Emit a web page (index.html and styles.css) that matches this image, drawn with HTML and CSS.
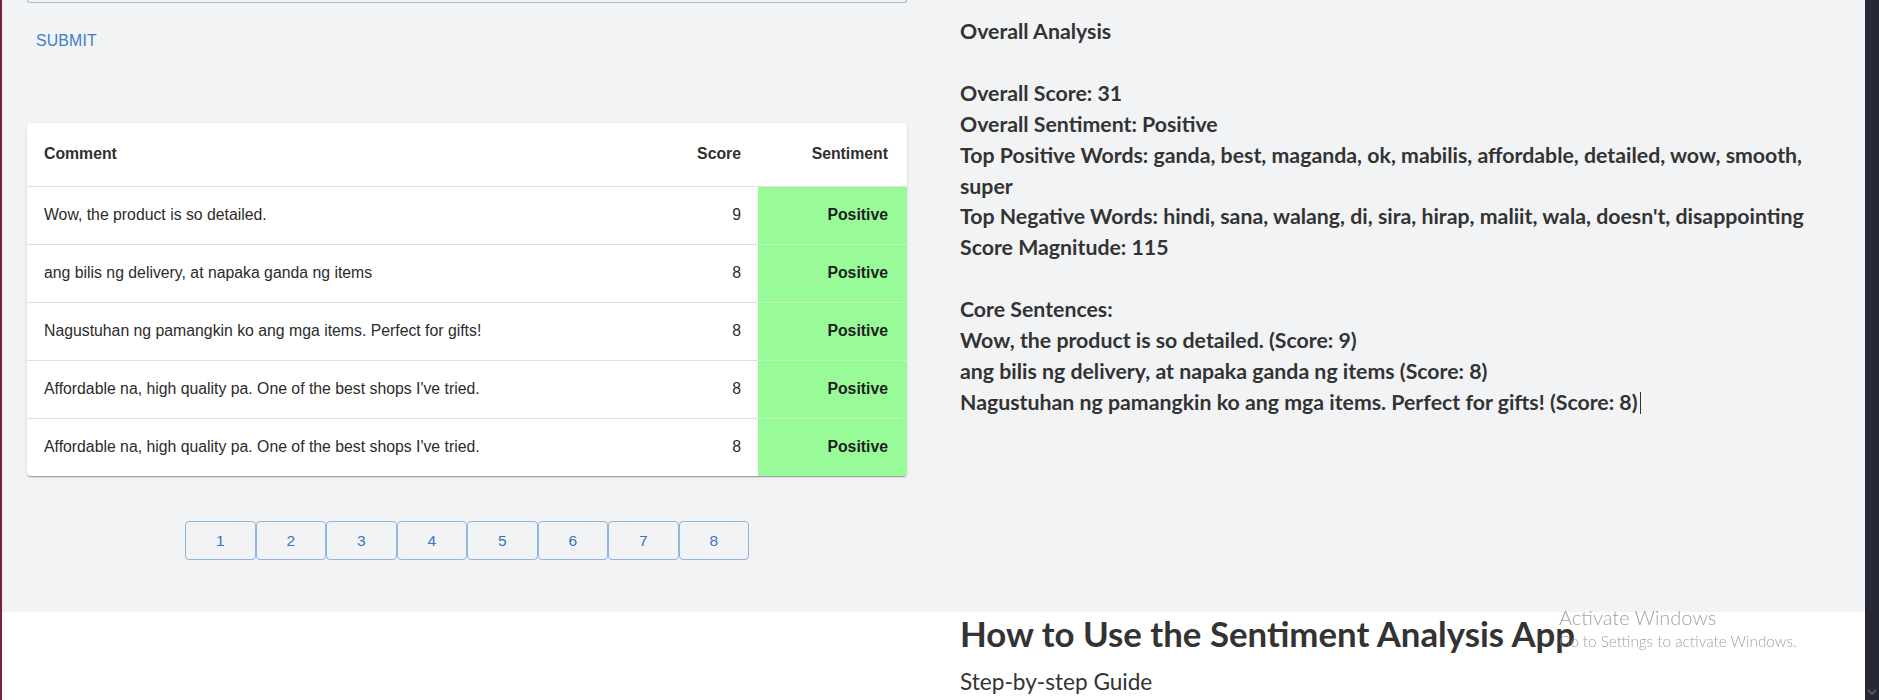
FILE: index.html
```html
<!DOCTYPE html>
<html lang="en">
<head>
<meta charset="utf-8">
<title>Sentiment Analysis</title>
<link rel="stylesheet" href="styles.css">
</head>
<body>
<div class="page">
  <div class="edge"></div>
  <div class="content">
    <section class="analysis">
      <div class="left">
        <div class="input-tail"></div>
        <button class="submit">Submit</button>
        <div class="card">
          <table class="results">
            <colgroup>
              <col>
              <col class="col-score">
              <col class="col-sent">
            </colgroup>
            <thead>
              <tr>
                <th class="c-comment">Comment</th>
                <th class="c-score">Score</th>
                <th class="c-sent">Sentiment</th>
              </tr>
            </thead>
            <tbody>
              <tr>
                <td class="c-comment">Wow, the product is so detailed.</td>
                <td class="c-score">9</td>
                <td class="c-sent positive">Positive</td>
              </tr>
              <tr>
                <td class="c-comment">ang bilis ng delivery, at napaka ganda ng items</td>
                <td class="c-score">8</td>
                <td class="c-sent positive">Positive</td>
              </tr>
              <tr>
                <td class="c-comment">Nagustuhan ng pamangkin ko ang mga items. Perfect for gifts!</td>
                <td class="c-score">8</td>
                <td class="c-sent positive">Positive</td>
              </tr>
              <tr>
                <td class="c-comment">Affordable na, high quality pa. One of the best shops I've tried.</td>
                <td class="c-score">8</td>
                <td class="c-sent positive">Positive</td>
              </tr>
              <tr>
                <td class="c-comment">Affordable na, high quality pa. One of the best shops I've tried.</td>
                <td class="c-score">8</td>
                <td class="c-sent positive">Positive</td>
              </tr>
            </tbody>
          </table>
        </div>
        <div class="pager">
          <button class="page-btn">1</button>
          <button class="page-btn">2</button>
          <button class="page-btn">3</button>
          <button class="page-btn">4</button>
          <button class="page-btn">5</button>
          <button class="page-btn">6</button>
          <button class="page-btn">7</button>
          <button class="page-btn">8</button>
        </div>
      </div>
      <div class="right">
        <div class="result-text">
          <div class="line">Overall Analysis</div>
          <div class="line">&nbsp;</div>
          <div class="line">Overall Score: 31</div>
          <div class="line">Overall Sentiment: Positive</div>
          <div class="line">Top Positive Words: ganda, best, maganda, ok, mabilis, affordable, detailed, wow, smooth,</div>
          <div class="line">super</div>
          <div class="line">Top Negative Words: hindi, sana, walang, di, sira, hirap, maliit, wala, doesn't, disappointing</div>
          <div class="line">Score Magnitude: 115</div>
          <div class="line">&nbsp;</div>
          <div class="line">Core Sentences:</div>
          <div class="line">Wow, the product is so detailed. (Score: 9)</div>
          <div class="line">ang bilis ng delivery, at napaka ganda ng items (Score: 8)</div>
          <div class="line">Nagustuhan ng pamangkin ko ang mga items. Perfect for gifts! (Score: 8)<span class="caret"></span></div>
        </div>
      </div>
    </section>
    <section class="guide">
      <div class="guide-spacer"></div>
      <div class="guide-body">
        <h1 class="guide-title">How to Use the Sentiment Analysis App</h1>
        <h2 class="guide-sub">Step-by-step Guide</h2>
      </div>
    </section>
  </div>
  <div class="scrollbar">
    <svg class="chev" width="10" height="6" viewBox="0 0 10 6"><path d="M1 1 L5 5 L9 1" fill="none" stroke="#6b6f7c" stroke-width="1.3"/></svg>
  </div>
</div>
<div class="watermark">
  <div class="wm-title">Activate Windows</div>
  <div class="wm-sub">Go to Settings to activate Windows.</div>
</div>
</body>
</html>
```

FILE: styles.css
```css
* { box-sizing: border-box; }

html, body {
  margin: 0;
  padding: 0;
  height: 700px;
  overflow: hidden;
  background: #ffffff;
}

.page {
  display: flex;
  height: 700px;
  width: 1879px;
}

.edge {
  width: 2px;
  flex: 0 0 2px;
  background: #7e2035;
}

.content {
  flex: 1 1 auto;
  min-width: 0;
  background: #ffffff;
}

.scrollbar {
  flex: 0 0 14px;
  width: 14px;
  background: #262935;
  display: flex;
  flex-direction: column;
  justify-content: flex-end;
  align-items: center;
  padding-bottom: 5px;
}

/* ---------- analysis section ---------- */
.analysis {
  display: grid;
  grid-template-columns: 932px 1fr;
  background: #f2f3f5;
  height: 612px;
}

.left {
  padding: 0 0 0 25px;
  display: flex;
  flex-direction: column;
  align-items: flex-start;
}

.input-tail {
  width: 880px;
  height: 3px;
  border: 1px solid #a9b8d2;
  border-top: none;
  border-radius: 0 0 5px 5px;
}

.submit {
  margin-top: 20px;
  height: 36px;
  padding: 6px 9px;
  border: none;
  background: transparent;
  font-family: "Liberation Sans", Arial, sans-serif;
  font-size: 15.8px;
  line-height: 24px;
  letter-spacing: 0.2px;
  text-transform: uppercase;
  color: #3d7fc9;
}

.card {
  margin-top: 64px;
  width: 880px;
  background: #ffffff;
  border-radius: 4px;
  overflow: hidden;
  box-shadow: 0 2px 1px -1px rgba(0,0,0,0.2), 0 1px 1px 0 rgba(0,0,0,0.14), 0 1px 3px 0 rgba(0,0,0,0.12);
}

.results {
  width: 100%;
  border-collapse: collapse;
  table-layout: fixed;
  font-family: "Liberation Sans", Arial, sans-serif;
  font-size: 15.8px;
}

.col-score { width: 140px; }
.col-sent { width: 149px; }

.results th {
  height: 63px;
  font-weight: bold;
  color: #2f2f2f;
  border-bottom: 1px solid #e0e0e0;
  padding: 0 16px;
}

.results td {
  height: 58px;
  color: #2b2b2b;
  border-bottom: 1px solid #e0e0e0;
  padding: 0 16px;
}

.results tbody tr:last-child td { border-bottom: none; }

.results .c-comment { text-align: left; padding-left: 17px; }
.results .c-score { text-align: right; padding-right: 17px; }
.results .c-sent { text-align: right; padding-right: 19px; }

.results td.positive {
  background: #98fb98;
  font-weight: bold;
  color: #1f1f1f;
  border-bottom-color: #bdf7bd;
}

.pager {
  margin-top: 45px;
  align-self: stretch;
  width: 880px;
  display: flex;
  justify-content: center;
}

.page-btn {
  width: 70.5px;
  height: 39px;
  border: 1px solid #8fb5e0;
  border-radius: 4px;
  background: transparent;
  font-family: "Liberation Sans", Arial, sans-serif;
  font-size: 15.5px;
  color: #3b73bf;
  padding: 0;
}

/* ---------- right result text ---------- */
.right {
  padding: 16px 0 0 26px;
}

.result-text {
  font-family: Lato, "Open Sans", sans-serif;
  font-weight: bold;
  font-size: 21.3px;
  line-height: 30.9px;
  color: #333333;
  white-space: nowrap;
}

.caret {
  display: inline-block;
  width: 0;
  height: 22px;
  border-left: 1.5px solid #333333;
  vertical-align: -4px;
  margin-left: 2px;
}

/* ---------- guide section ---------- */
.guide {
  display: grid;
  grid-template-columns: 932px 1fr;
  background: #ffffff;
}

.guide-body {
  padding-left: 26px;
}

.guide-title {
  margin: 3px 0 0 0;
  font-family: Lato, "Open Sans", sans-serif;
  font-weight: bold;
  font-size: 34.8px;
  line-height: 38px;
  color: #333333;
}

.guide-sub {
  margin: 15px 0 0 0;
  font-family: Lato, "Open Sans", sans-serif;
  font-weight: normal;
  font-size: 22.6px;
  line-height: 28px;
  color: #333333;
}

/* ---------- OS watermark overlay ---------- */
.watermark {
  position: fixed;
  left: 1559px;
  top: 605px;
  font-family: Lato, "Open Sans", sans-serif;
  color: rgba(130, 130, 130, 0.75);
}

.wm-title {
  font-size: 20px;
  font-weight: 300;
  line-height: 25px;
}

.wm-sub {
  font-size: 15.3px;
  font-weight: 300;
  line-height: 20px;
  margin-top: 1px;
}
```
